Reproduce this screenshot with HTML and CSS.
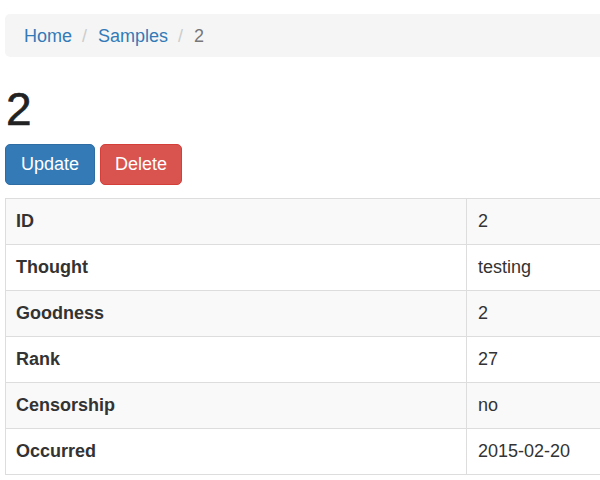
FILE: index.html
```html
<!DOCTYPE html>
<html>
<head>
<meta charset="utf-8">
<link rel="stylesheet" href="styles.css">
</head>
<body>
<div class="page">
  <ol class="breadcrumb">
    <li><a href="#">Home</a></li>
    <li class="sep">/</li>
    <li><a href="#">Samples</a></li>
    <li class="sep">/</li>
    <li class="active">2</li>
  </ol>
  <h1 class="title">2</h1>
  <div class="actions">
    <a class="btn btn-primary" href="#">Update</a>
    <a class="btn btn-danger" href="#">Delete</a>
  </div>
  <table class="details">
    <tbody>
      <tr><th>ID</th><td>2</td></tr>
      <tr><th>Thought</th><td>testing</td></tr>
      <tr><th>Goodness</th><td>2</td></tr>
      <tr><th>Rank</th><td>27</td></tr>
      <tr><th>Censorship</th><td>no</td></tr>
      <tr><th>Occurred</th><td>2015-02-20</td></tr>
    </tbody>
  </table>
</div>
</body>
</html>
```
FILE: styles.css
```css
html, body {
  margin: 0;
  padding: 0;
  background: #fff;
  overflow: hidden;
}
body {
  font-family: "Liberation Sans", Arial, sans-serif;
  font-size: 18px;
  color: #333;
}
.page {
  padding-left: 5px;
  width: 640px;
}
.breadcrumb {
  list-style: none;
  margin: 14px 0 0 0;
  padding: 11px 19px 9px;
  line-height: 23px;
  background: #f5f5f5;
  border-radius: 5px;
  display: flex;
}
.breadcrumb li {
  display: block;
}
.breadcrumb a {
  color: #337ab7;
  text-decoration: none;
}
.breadcrumb .sep {
  color: #ccc;
  padding: 0 11px 0 10px;
}
.breadcrumb .active {
  color: #777;
}
.title {
  font-size: 46px;
  font-weight: normal;
  line-height: 1.1;
  margin: 27px 0 9px 1px;
  color: #222;
  -webkit-text-stroke: 0.6px #222;
}
.actions {
  display: flex;
  gap: 5px;
}
.btn {
  display: block;
  padding: 8px 14px;
  line-height: 23px;
  font-size: 18px;
  border: 1px solid transparent;
  border-radius: 5px;
  color: #fff;
  text-decoration: none;
}
.btn-primary {
  background: #337ab7;
  border-color: #2e6da4;
  padding-left: 15px;
  padding-right: 15px;
}
.btn-danger {
  background: #d9534f;
  border-color: #d43f3a;
}
.details {
  margin-top: 13px;
  width: 640px;
  border-collapse: collapse;
  border: 1px solid #ddd;
}
.details th,
.details td {
  border: 1px solid #ddd;
  padding: 10px 11px 10px 10px;
  line-height: 25px;
  text-align: left;
  vertical-align: top;
}
.details th {
  width: 439px;
  font-weight: bold;
}
.details td {
  padding-left: 11px;
}
.details tr:nth-child(odd) {
  background: #f9f9f9;
}
```
